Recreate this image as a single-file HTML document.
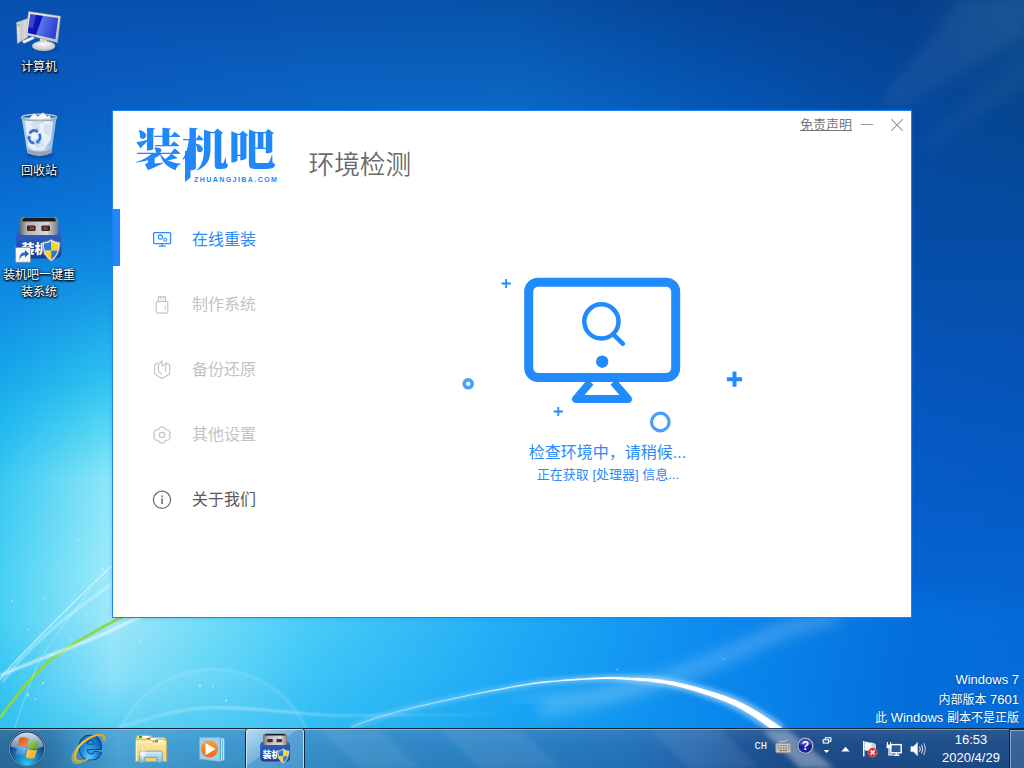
<!DOCTYPE html>
<html lang="zh-CN">
<head>
<meta charset="utf-8">
<title>装机吧一键重装系统</title>
<style>
*{box-sizing:border-box;margin:0;padding:0}
html,body{width:1024px;height:768px;overflow:hidden;background:#0a5ab8}
body{position:relative;font-family:"Liberation Sans","Noto Sans CJK SC",sans-serif;}
#desk{position:absolute;left:0;top:0;width:1024px;height:768px;overflow:hidden;
 background:
  radial-gradient(ellipse 1430px 1000px at 200px 690px, #58cef5 0%, #44c2f2 8%, #2ab0ee 22%, #1596e8 34%, #0f7cde 44%, #0868d0 57%, #0a5cb8 65%, #0850a8 72%, #05408e 88%, #053c88 100%);
}
#wallsvg{position:absolute;left:0;top:0}
.dicon{position:absolute;color:#fff;font-size:12px;line-height:17px;text-align:center;
 text-shadow:0 1px 2px #000,1px 1px 2px #000,0 0 3px rgba(0,0,0,.8);}
/* window */
#win{position:absolute;left:112px;top:110px;width:800px;height:508px;background:#fff;border:1px solid #1a82f5;box-shadow:0 0 4px rgba(20,120,240,.35)}
#win .abs{position:absolute}
.logo{position:absolute;left:23px;top:10px;width:160px;height:70px;color:#2288fa}
.logo .cn{position:absolute;left:-1px;top:2.4px;font-family:"Liberation Serif","Noto Serif CJK SC",serif;font-weight:900;font-size:46px;line-height:60px;letter-spacing:0;white-space:nowrap;transform:scale(1.018,.955);transform-origin:0 0}
.logo .en{position:absolute;left:58px;top:55px;font-size:7px;line-height:8px;letter-spacing:1.44px;white-space:nowrap;font-weight:700}
.logo .st{position:absolute;left:48.5px;top:30px;width:6px;height:31.5px;background:#2288fa;clip-path:polygon(0 0,100% 0,100% 84%,0 100%)}
.title{position:absolute;left:195.5px;top:36px;font-size:25.7px;line-height:36px;color:#6a6a6a;font-weight:350;white-space:nowrap}
.nav{position:absolute;left:0;width:260px;height:57px}
.nav .tx{position:absolute;left:79px;top:20px;font-size:16px;line-height:22px;white-space:nowrap}
.nav svg{position:absolute}
.nav.on{color:#2a8afb}
.nav.off{color:#c3c3c3}
.nav.nm{color:#595959}
.bar{position:absolute;left:0;top:98px;width:7px;height:57px;background:#2386fb}
.tr{position:absolute;font-size:13px;color:#777}
/* taskbar */
#tb{position:absolute;left:0;top:728px;width:1024px;height:40px;overflow:hidden;
 background:linear-gradient(to right,#2a6c9c 0%,#2e78aa 5%,#3a90c6 7.5%,#4ca4d8 11.5%,#48a2d6 14%,#3e9ad0 20%,#3892cc 30%,#3088c8 40%,#2a80c4 50%,#2475bc 61%,#2468b0 68%,#1e5698 73%,#1d4e8c 78%,#1e4e8a 100%);}
#tb .l1{position:absolute;left:0;top:0;width:100%;height:1px;background:#14283c}
#tb .l2{position:absolute;left:0;top:1px;width:100%;height:1px;background:linear-gradient(to right,#7fb4d6,#8cc4e4 20%,#7aa9d0 60%,#6f93bd 100%)}
#tb .sh{position:absolute;left:0;top:2px;width:100%;height:38px;background:linear-gradient(to bottom,rgba(255,255,255,.06) 0%,rgba(255,255,255,0) 40%,rgba(0,0,20,.06) 100%)}
#tbsvg{position:absolute;left:0;top:728px}
.wm .la{font-size:13px}
.wm{position:absolute;right:5px;color:#fff;font-size:12px;line-height:18px;white-space:nowrap;text-align:right;text-shadow:0 0 2px rgba(0,0,0,.35)}
.tray{position:absolute;color:#fff;white-space:nowrap}
</style>
</head>
<body>
<div id="desk">
<svg id="wallsvg" width="1024" height="768" viewBox="0 0 1024 768">
<defs>
<!--MESHDEFS--><linearGradient id="vg" x1="0" y1="0" x2="0" y2="1"><stop offset="0" stop-color="#000"/><stop offset="1" stop-color="#fff"/></linearGradient>
<mask id="vm" maskContentUnits="objectBoundingBox"><rect width="1" height="1" fill="url(#vg)"/></mask>
<linearGradient id="r0" x1="0" y1="0" x2="1024" y2="0" gradientUnits="userSpaceOnUse"><stop offset="0.0000" stop-color="#0850ae"/><stop offset="0.1094" stop-color="#0850b0"/><stop offset="0.2070" stop-color="#0950ae"/><stop offset="0.3047" stop-color="#0952ad"/><stop offset="0.5000" stop-color="#0852a8"/><stop offset="0.6953" stop-color="#054496"/><stop offset="0.8906" stop-color="#05408c"/><stop offset="1.0000" stop-color="#124e8e"/></linearGradient>
<linearGradient id="r1" x1="0" y1="0" x2="1024" y2="0" gradientUnits="userSpaceOnUse"><stop offset="0.0000" stop-color="#085ac0"/><stop offset="0.1094" stop-color="#0a60c4"/><stop offset="0.2070" stop-color="#0b63c5"/><stop offset="0.3047" stop-color="#0b66c6"/><stop offset="0.5000" stop-color="#0b69c6"/><stop offset="0.6953" stop-color="#0558b8"/><stop offset="0.8906" stop-color="#05489c"/><stop offset="1.0000" stop-color="#06468f"/></linearGradient>
<linearGradient id="r2" x1="0" y1="0" x2="1024" y2="0" gradientUnits="userSpaceOnUse"><stop offset="0.0000" stop-color="#0a74d6"/><stop offset="0.1094" stop-color="#0c7ada"/><stop offset="0.2070" stop-color="#0b74d3"/><stop offset="0.3047" stop-color="#0a6fcc"/><stop offset="0.5000" stop-color="#0863bf"/><stop offset="0.6953" stop-color="#0758b2"/><stop offset="0.8906" stop-color="#054ca4"/><stop offset="1.0000" stop-color="#054ca2"/></linearGradient>
<linearGradient id="r3" x1="0" y1="0" x2="1024" y2="0" gradientUnits="userSpaceOnUse"><stop offset="0.0000" stop-color="#0f86e0"/><stop offset="0.1094" stop-color="#1292e4"/><stop offset="0.2070" stop-color="#108add"/><stop offset="0.3047" stop-color="#0f82d6"/><stop offset="0.5000" stop-color="#0c71c8"/><stop offset="0.6953" stop-color="#0860ba"/><stop offset="0.8906" stop-color="#0550ac"/><stop offset="1.0000" stop-color="#0550aa"/></linearGradient>
<linearGradient id="r4" x1="0" y1="0" x2="1024" y2="0" gradientUnits="userSpaceOnUse"><stop offset="0.0000" stop-color="#16a8ea"/><stop offset="0.1094" stop-color="#30c4f0"/><stop offset="0.2070" stop-color="#2bb6ea"/><stop offset="0.3047" stop-color="#26a8e3"/><stop offset="0.5000" stop-color="#1b8dd6"/><stop offset="0.6953" stop-color="#1072c9"/><stop offset="0.8906" stop-color="#0656bc"/><stop offset="1.0000" stop-color="#0654b8"/></linearGradient>
<linearGradient id="r5" x1="0" y1="0" x2="1024" y2="0" gradientUnits="userSpaceOnUse"><stop offset="0.0000" stop-color="#22baee"/><stop offset="0.1094" stop-color="#5cdaf4"/><stop offset="0.2070" stop-color="#51caee"/><stop offset="0.3047" stop-color="#47bae8"/><stop offset="0.5000" stop-color="#319adb"/><stop offset="0.6953" stop-color="#1c79ce"/><stop offset="0.8906" stop-color="#0659c2"/><stop offset="1.0000" stop-color="#0558be"/></linearGradient>
<linearGradient id="r6" x1="0" y1="0" x2="1024" y2="0" gradientUnits="userSpaceOnUse"><stop offset="0.0000" stop-color="#38c8f2"/><stop offset="0.1094" stop-color="#90e8f8"/><stop offset="0.2070" stop-color="#7fd6f2"/><stop offset="0.3047" stop-color="#6ec5ec"/><stop offset="0.5000" stop-color="#4ba2df"/><stop offset="0.6953" stop-color="#297fd2"/><stop offset="0.8906" stop-color="#065cc6"/><stop offset="1.0000" stop-color="#055ac4"/></linearGradient>
<linearGradient id="r7" x1="0" y1="0" x2="1024" y2="0" gradientUnits="userSpaceOnUse"><stop offset="0.0000" stop-color="#48d0f4"/><stop offset="0.1094" stop-color="#a0ecf9"/><stop offset="0.2070" stop-color="#8ddbf4"/><stop offset="0.3047" stop-color="#79caef"/><stop offset="0.5000" stop-color="#53a8e6"/><stop offset="0.6953" stop-color="#2c86dc"/><stop offset="0.8906" stop-color="#0564d2"/><stop offset="1.0000" stop-color="#0563d0"/></linearGradient>
<linearGradient id="r8" x1="0" y1="0" x2="1024" y2="0" gradientUnits="userSpaceOnUse"><stop offset="0.0000" stop-color="#48d0f4"/><stop offset="0.1094" stop-color="#a0e8f8"/><stop offset="0.2070" stop-color="#70dcf8"/><stop offset="0.3047" stop-color="#48ccf8"/><stop offset="0.5000" stop-color="#22acf6"/><stop offset="0.6953" stop-color="#0c8cf0"/><stop offset="0.8906" stop-color="#0470dc"/><stop offset="1.0000" stop-color="#056ad6"/></linearGradient>
<linearGradient id="r9" x1="0" y1="0" x2="1024" y2="0" gradientUnits="userSpaceOnUse"><stop offset="0.0000" stop-color="#38c4f2"/><stop offset="0.1094" stop-color="#88e0f8"/><stop offset="0.2070" stop-color="#60d4f6"/><stop offset="0.3047" stop-color="#3cc4f6"/><stop offset="0.5000" stop-color="#1ca8f4"/><stop offset="0.6953" stop-color="#0b8aee"/><stop offset="0.8906" stop-color="#046eda"/><stop offset="1.0000" stop-color="#046cd8"/></linearGradient>
<linearGradient id="r10" x1="0" y1="0" x2="1024" y2="0" gradientUnits="userSpaceOnUse"><stop offset="0.0000" stop-color="#30c0f0"/><stop offset="0.1094" stop-color="#58d0f4"/><stop offset="0.2070" stop-color="#44c8f4"/><stop offset="0.3047" stop-color="#30bcf4"/><stop offset="0.5000" stop-color="#18a4f2"/><stop offset="0.6953" stop-color="#0a8aee"/><stop offset="0.8906" stop-color="#046eda"/><stop offset="1.0000" stop-color="#046cd8"/></linearGradient>
<linearGradient id="r11" x1="0" y1="0" x2="1024" y2="0" gradientUnits="userSpaceOnUse"><stop offset="0.0000" stop-color="#30c0f0"/><stop offset="0.1094" stop-color="#58d0f4"/><stop offset="0.2070" stop-color="#44c8f4"/><stop offset="0.3047" stop-color="#30bcf4"/><stop offset="0.5000" stop-color="#18a4f2"/><stop offset="0.6953" stop-color="#0a8aee"/><stop offset="0.8906" stop-color="#046eda"/><stop offset="1.0000" stop-color="#046cd8"/></linearGradient><!--/MESHDEFS-->
<filter id="b1" x="-20%" y="-20%" width="140%" height="140%"><feGaussianBlur stdDeviation="1"/></filter>
<filter id="b2" x="-20%" y="-20%" width="140%" height="140%"><feGaussianBlur stdDeviation="2.5"/></filter>
<filter id="b6" x="-20%" y="-20%" width="140%" height="140%"><feGaussianBlur stdDeviation="7"/></filter>
<radialGradient id="glow1" cx="0.5" cy="0.5" r="0.5"><stop offset="0" stop-color="#fff" stop-opacity=".30"/><stop offset="1" stop-color="#fff" stop-opacity="0"/></radialGradient>
<linearGradient id="sw" x1="351" y1="0" x2="780" y2="0" gradientUnits="userSpaceOnUse"><stop offset="0" stop-color="#fff" stop-opacity=".35"/><stop offset=".35" stop-color="#fff" stop-opacity=".75"/><stop offset=".6" stop-color="#fff" stop-opacity="1"/><stop offset="1" stop-color="#fff" stop-opacity="1"/></linearGradient>
<linearGradient id="le" x1="118" y1="0" x2="512" y2="0" gradientUnits="userSpaceOnUse"><stop offset="0" stop-color="#fff" stop-opacity=".2"/><stop offset=".3" stop-color="#fff" stop-opacity=".42"/><stop offset=".6" stop-color="#fff" stop-opacity=".25"/><stop offset="1" stop-color="#fff" stop-opacity="0"/></linearGradient>
</defs>
<!--MESH--><rect x="0" y="0" width="1024" height="110" fill="url(#r0)"/>
<rect x="0" y="0" width="1024" height="110" fill="url(#r1)" mask="url(#vm)"/>
<rect x="0" y="110" width="1024" height="110" fill="url(#r1)"/>
<rect x="0" y="110" width="1024" height="110" fill="url(#r2)" mask="url(#vm)"/>
<rect x="0" y="220" width="1024" height="60" fill="url(#r2)"/>
<rect x="0" y="220" width="1024" height="60" fill="url(#r3)" mask="url(#vm)"/>
<rect x="0" y="280" width="1024" height="100" fill="url(#r3)"/>
<rect x="0" y="280" width="1024" height="100" fill="url(#r4)" mask="url(#vm)"/>
<rect x="0" y="380" width="1024" height="50" fill="url(#r4)"/>
<rect x="0" y="380" width="1024" height="50" fill="url(#r5)" mask="url(#vm)"/>
<rect x="0" y="430" width="1024" height="50" fill="url(#r5)"/>
<rect x="0" y="430" width="1024" height="50" fill="url(#r6)" mask="url(#vm)"/>
<rect x="0" y="480" width="1024" height="100" fill="url(#r6)"/>
<rect x="0" y="480" width="1024" height="100" fill="url(#r7)" mask="url(#vm)"/>
<rect x="0" y="580" width="1024" height="40" fill="url(#r7)"/>
<rect x="0" y="580" width="1024" height="40" fill="url(#r8)" mask="url(#vm)"/>
<rect x="0" y="620" width="1024" height="60" fill="url(#r8)"/>
<rect x="0" y="620" width="1024" height="60" fill="url(#r9)" mask="url(#vm)"/>
<rect x="0" y="680" width="1024" height="48" fill="url(#r9)"/>
<rect x="0" y="680" width="1024" height="48" fill="url(#r10)" mask="url(#vm)"/>
<rect x="0" y="728" width="1024" height="40" fill="url(#r10)"/>
<rect x="0" y="728" width="1024" height="40" fill="url(#r11)" mask="url(#vm)"/><!--/MESH-->
<g fill="#fff" filter="url(#b6)"><polygon points="1024,0 1024,34 900,110 880,100 960,0" opacity=".05"/><polygon points="1024,60 1024,84 930,150 922,140" opacity=".04"/></g>
<circle cx="213.5" cy="771.6" r="103.6" fill="#fff" fill-opacity=".05"/>
<circle cx="213.5" cy="771.6" r="102.6" fill="none" stroke="#fff" stroke-opacity=".13" stroke-width="2.4" filter="url(#b1)"/>
<path d="M540,708 C620,700 700,668 770,636 C800,624 820,620 840,612" stroke="#fff" stroke-opacity=".2" stroke-width="16" fill="none" filter="url(#b6)"/>
<path d="M512,700 C560,699 620,690 660,680" stroke="#fff" stroke-opacity=".10" stroke-width="10" fill="none" filter="url(#b6)"/>
<path d="M118.0,727.5 L125.8,725.3 L133.2,723.1 L140.1,721.0 L146.8,719.1 L153.2,717.2 L159.4,715.5 L165.6,713.9 L171.9,712.4 L178.2,711.1 L184.7,710.0 L191.5,709.1 L198.7,708.4 L206.4,708.0 L214.6,707.7 L223.4,707.7 L232.9,707.9 L243.1,708.4 L253.6,709.1 L264.4,709.9 L275.0,710.8 L285.3,711.7 L295.0,712.6 L303.8,713.4 L311.5,714.1 L318.2,714.6 L324.3,715.0 L330.2,715.3 L336.1,715.5 L342.5,715.6 L349.7,715.6 L358.1,715.5 L368.1,715.4 L380.0,715.3 L394.2,715.2 L411.0,715.0 L430.8,714.9 L454.0,714.8 L481.0,714.7 L512.0,714.7" stroke="url(#le)" stroke-width="2.2" fill="none" filter="url(#b1)"/>
<path d="M351.4,728.5 L358.1,725.5 L366.0,722.5 L375.0,719.5 L385.0,716.5 L395.6,713.5 L406.9,710.6 L418.6,707.7 L430.5,704.9 L442.4,702.3 L454.3,699.7 L465.9,697.3 L477.0,695.1 L487.5,693.1 L497.3,691.2 L506.1,689.6 L513.7,688.2 L520.2,687.1 L525.7,686.2 L530.5,685.4 L534.8,684.8 L538.9,684.3 L543.1,683.9 L547.7,683.5 L552.8,683.1 L558.5,682.7 L564.8,682.3 L571.4,681.8 L578.1,681.4 L584.7,681.1 L591.0,680.8 L596.9,680.5 L602.1,680.4 L606.6,680.4 L610.5,680.5 L614.0,680.6 L617.3,680.8 L620.4,681.0 L623.6,681.3 L627.0,681.6 L630.8,682.0 L634.8,682.3 L639.3,682.7 L644.0,683.1 L649.0,683.6 L654.2,684.3 L659.5,685.0 L665.1,686.0 L670.7,687.2 L676.4,688.5 L682.2,690.0 L687.9,691.6 L693.5,693.3 L699.0,695.0 L704.2,696.7 L709.0,698.5 L713.6,700.1 L717.7,701.7 L721.5,703.2 L725.1,704.7 L728.4,706.2 L731.6,707.7 L734.8,709.3 L737.9,711.0 L741.1,712.8 L744.3,714.7 L747.5,716.6 L750.8,718.7 L753.9,720.7 L757.0,722.7 L760.0,724.7 L762.8,726.7 L765.4,728.5 L767.8,730.3 L770.0,731.9 L771.8,733.3 L773.4,734.5 L774.5,735.4 L775.3,736.1 L775.6,736.4 L784.4,725.6 L783.7,725.1 L782.7,724.5 L781.4,723.6 L779.7,722.4 L777.7,721.0 L775.4,719.5 L772.8,717.8 L770.1,715.9 L767.1,714.0 L764.0,712.0 L760.7,710.0 L757.3,707.9 L753.9,705.9 L750.4,704.0 L746.9,702.1 L743.4,700.3 L739.9,698.7 L736.4,697.2 L732.8,695.8 L729.1,694.4 L725.2,693.1 L721.2,691.8 L716.8,690.4 L712.1,689.0 L707.1,687.5 L701.7,686.0 L696.0,684.5 L690.2,683.0 L684.3,681.6 L678.3,680.3 L672.3,679.2 L666.3,678.2 L660.6,677.5 L655.0,676.9 L649.6,676.5 L644.5,676.2 L639.7,676.1 L635.2,675.9 L631.1,675.8 L627.4,675.8 L624.0,675.7 L620.7,675.6 L617.5,675.5 L614.1,675.5 L610.5,675.6 L606.5,675.7 L601.9,675.9 L596.7,676.1 L590.8,676.5 L584.4,676.9 L577.8,677.4 L571.1,678.0 L564.5,678.5 L558.2,679.1 L552.5,679.6 L547.3,680.1 L542.8,680.6 L538.5,681.1 L534.4,681.6 L530.0,682.3 L525.2,683.1 L519.6,684.1 L513.2,685.3 L505.5,686.7 L496.7,688.4 L487.0,690.3 L476.5,692.4 L465.3,694.7 L453.8,697.2 L441.9,699.8 L429.9,702.5 L418.0,705.3 L406.3,708.3 L395.0,711.3 L384.3,714.3 L374.4,717.4 L365.3,720.5 L357.3,723.6 L350.6,726.7Z" fill="#fff" fill-opacity=".5" filter="url(#b2)"/>
<path d="M351.2,728.0 L357.9,725.0 L365.8,721.9 L374.8,718.9 L384.8,715.9 L395.5,712.8 L406.7,709.9 L418.4,707.0 L430.3,704.2 L442.3,701.5 L454.1,699.0 L465.7,696.5 L476.9,694.3 L487.4,692.2 L497.1,690.4 L505.9,688.7 L513.5,687.3 L520.0,686.2 L525.5,685.3 L530.3,684.5 L534.7,683.9 L538.8,683.4 L543.0,682.9 L547.6,682.5 L552.7,682.1 L558.4,681.6 L564.7,681.1 L571.3,680.7 L578.0,680.2 L584.6,679.8 L590.9,679.5 L596.8,679.2 L602.0,679.0 L606.6,679.0 L610.5,679.0 L614.1,679.1 L617.3,679.2 L620.5,679.4 L623.7,679.6 L627.1,679.9 L630.8,680.1 L634.9,680.4 L639.4,680.7 L644.1,681.1 L649.1,681.6 L654.4,682.2 L659.8,682.9 L665.4,683.8 L671.1,685.0 L676.9,686.3 L682.7,687.8 L688.5,689.4 L694.2,691.0 L699.6,692.7 L704.9,694.4 L709.8,696.1 L714.4,697.7 L718.6,699.2 L722.5,700.7 L726.1,702.1 L729.5,703.6 L732.8,705.1 L736.1,706.6 L739.3,708.3 L742.5,710.1 L745.8,712.0 L749.1,714.0 L752.3,716.1 L755.5,718.1 L758.7,720.2 L761.6,722.2 L764.5,724.2 L767.1,726.1 L769.5,727.8 L771.7,729.4 L773.6,730.8 L775.2,732.0 L776.4,732.9 L777.3,733.6 L777.7,733.9 L782.3,728.1 L781.8,727.7 L780.8,727.0 L779.5,726.0 L777.9,724.9 L775.9,723.5 L773.7,721.9 L771.1,720.2 L768.4,718.4 L765.4,716.5 L762.3,714.5 L759.1,712.5 L755.8,710.5 L752.3,708.5 L748.9,706.6 L745.4,704.8 L742.0,703.0 L738.6,701.4 L735.2,699.8 L731.7,698.4 L728.1,697.0 L724.3,695.6 L720.3,694.2 L716.0,692.8 L711.3,691.4 L706.3,689.9 L701.0,688.3 L695.4,686.7 L689.6,685.2 L683.7,683.8 L677.8,682.5 L671.8,681.3 L666.0,680.4 L660.3,679.6 L654.7,679.0 L649.4,678.6 L644.3,678.2 L639.5,678.0 L635.1,677.8 L631.0,677.7 L627.3,677.5 L623.9,677.4 L620.6,677.2 L617.4,677.1 L614.1,677.1 L610.5,677.0 L606.5,677.1 L602.0,677.2 L596.7,677.5 L590.8,677.8 L584.5,678.2 L577.9,678.6 L571.2,679.1 L564.6,679.6 L558.3,680.2 L552.5,680.7 L547.4,681.1 L542.9,681.6 L538.7,682.1 L534.5,682.6 L530.1,683.2 L525.3,684.0 L519.8,685.0 L513.3,686.1 L505.7,687.6 L496.9,689.2 L487.2,691.1 L476.6,693.2 L465.5,695.5 L453.9,697.9 L442.1,700.5 L430.1,703.2 L418.2,706.1 L406.5,709.0 L395.2,712.0 L384.5,715.0 L374.6,718.1 L365.5,721.1 L357.5,724.2 L350.8,727.2Z" fill="url(#sw)"/>
<path d="M0.0,718.0 L2.4,714.6 L4.9,711.2 L7.4,707.9 L9.9,704.5 L12.5,701.1 L15.1,697.8 L17.7,694.5 L20.4,691.2 L23.1,687.9 L25.9,684.7 L28.7,681.5 L31.6,678.3 L34.5,675.3 L37.5,672.2 L40.5,669.2 L43.6,666.3 L46.7,663.5 L49.9,660.7 L53.2,658.0 L56.5,655.4 L59.9,652.9 L63.3,650.4 L66.8,648.1 L70.4,645.8 L74.0,643.6 L77.6,641.5 L81.3,639.4 L85.0,637.3 L88.6,635.1 L92.3,633.0 L95.9,630.9 L99.6,628.8 L103.3,626.7 L107.0,624.7 L110.7,622.7 L114.5,620.8 L118.3,618.9 L122.1,617.2 L126.0,615.5" stroke="#8cd840" stroke-width="2.7" fill="none"/>
<path d="M0.0,675.5 L6.1,673.0 L11.9,670.6 L17.6,668.2 L23.2,666.0 L28.5,663.9 L33.7,661.8 L38.7,659.8 L43.5,657.9 L48.2,656.1 L52.7,654.4 L57.0,652.7 L61.2,651.1 L65.2,649.5 L69.1,648.1 L72.8,646.6 L76.3,645.2 L79.7,643.9 L82.9,642.6 L86.0,641.4 L88.9,640.2 L91.7,639.0 L94.4,637.9 L97.0,636.8 L99.5,635.7 L101.9,634.6 L104.3,633.6 L106.7,632.5 L109.0,631.4 L111.4,630.3 L113.8,629.2 L116.3,628.0 L118.8,626.8 L121.4,625.6 L124.1,624.3 L127.0,623.0 L130.0,621.6 L133.1,620.1 L136.5,618.6 L140.0,617.0" stroke="#fff" stroke-opacity=".8" stroke-width="2.2" fill="none" filter="url(#b1)"/>
<path d="M0.0,680.0 L0.3,679.1 L1.1,677.8 L2.4,676.0 L4.2,673.8 L6.4,671.2 L9.0,668.2 L12.0,664.9 L15.4,661.4 L19.0,657.5 L22.9,653.4 L27.1,649.1 L31.5,644.6 L36.0,640.0 L40.7,635.3 L45.5,630.4 L50.4,625.5 L55.4,620.6 L60.3,615.7 L65.3,610.8 L70.2,606.0 L75.0,601.2 L79.8,596.6 L84.4,592.2 L88.8,587.9 L93.0,583.8 L97.0,580.0 L100.7,576.4 L104.1,573.2 L107.2,570.3 L110.0,567.7 L112.3,565.6 L114.2,563.8 L115.7,562.5 L116.6,561.7 L117.1,561.4 L117.0,561.7 L116.3,562.5 L115.0,563.9 L113.0,566.0" stroke="#fff" stroke-opacity=".55" stroke-width="1.3" fill="none"/>
<path d="M2.6,682.0 L5.2,678.4 L7.8,675.0 L10.5,671.5 L13.3,668.1 L16.1,664.8 L18.9,661.5 L21.8,658.3 L24.8,655.1 L27.8,652.0 L30.8,648.9 L33.8,645.9 L36.9,642.9 L40.0,640.0 L43.1,637.1 L46.2,634.3 L49.3,631.6 L52.5,628.9 L55.6,626.2 L58.7,623.7 L61.8,621.1 L64.9,618.6 L68.0,616.2 L71.0,613.8 L74.1,611.5 L77.0,609.2 L80.0,607.0 L82.9,604.8 L85.8,602.7 L88.6,600.7 L91.3,598.7 L94.0,596.7 L96.7,594.8 L99.3,593.0 L101.7,591.2 L104.2,589.4 L106.5,587.7 L108.8,586.1 L110.9,584.5 L113.0,583.0" stroke="#fff" stroke-opacity=".6" stroke-width="1.6" fill="none" filter="url(#b1)"/>
<path d="M14.8,728.0 L16.9,721.6 L18.9,715.7 L20.8,710.1 L22.6,704.9 L24.2,700.0 L25.8,695.5 L27.3,691.2 L28.7,687.3 L30.0,683.6 L31.3,680.1 L32.6,676.9 L33.8,673.9 L35.0,671.0 L36.2,668.3 L37.4,665.7 L38.5,663.2 L39.7,660.9 L41.0,658.6 L42.2,656.3 L43.6,654.1 L44.9,651.8 L46.4,649.6 L47.9,647.3 L49.5,645.0 L51.2,642.5 L53.0,640.0 L54.9,637.3 L57.0,634.5 L59.2,631.6 L61.5,628.4 L64.0,625.1 L66.7,621.5 L69.6,617.6 L72.6,613.5 L75.8,609.1 L79.3,604.3 L83.0,599.2 L86.9,593.8 L91.0,588.0" stroke="#fff" stroke-opacity=".3" stroke-width="1" fill="none"/>
<g fill="#fff" fill-opacity=".42"><circle cx="12" cy="601" r="1"/><circle cx="28" cy="629.5" r="1"/><circle cx="44" cy="598" r=".9"/><circle cx="51" cy="626.5" r=".8"/><circle cx="70" cy="638" r=".9"/><circle cx="86" cy="614.5" r=".9"/><circle cx="52" cy="655" r="1.2"/><circle cx="28" cy="695" r="1.6"/><circle cx="35" cy="699" r="1"/><circle cx="43" cy="683" r="1.2"/><circle cx="140" cy="640.5" r="1"/><circle cx="200" cy="686" r="1.4"/><circle cx="213" cy="686.5" r="1"/><circle cx="226" cy="700.5" r="1.2"/><circle cx="56" cy="562" r=".8"/><circle cx="78" cy="540" r=".9"/><circle cx="103" cy="569" r="1.1"/><circle cx="617" cy="669.5" r=".9"/><circle cx="724" cy="659" r=".8"/></g>
</svg>
</div>

<!-- desktop icons -->
<svg id="dsvg" width="90" height="300" viewBox="0 0 90 300" style="position:absolute;left:0;top:0">
<defs>
<linearGradient id="scr" x1="0" y1="0" x2="1" y2=".3"><stop offset="0" stop-color="#1a2ad0"/><stop offset=".45" stop-color="#0a10b4"/><stop offset=".5" stop-color="#5a74e6"/><stop offset="1" stop-color="#2a44d6"/></linearGradient>
<linearGradient id="frm" x1="0" y1="0" x2="1" y2="1"><stop offset="0" stop-color="#f4f3ee"/><stop offset="1" stop-color="#c2c1b8"/></linearGradient>
<linearGradient id="twr" x1="0" y1="0" x2="1" y2="0"><stop offset="0" stop-color="#f0f0ee"/><stop offset=".4" stop-color="#c9c9c6"/><stop offset="1" stop-color="#e4e4e2"/></linearGradient>
<radialGradient id="bas" cx=".5" cy=".3" r=".7"><stop offset="0" stop-color="#fdfdfd"/><stop offset="1" stop-color="#b9bcc0"/></radialGradient>
<linearGradient id="bin" x1="0" y1="0" x2="1" y2="0"><stop offset="0" stop-color="#b9d4ee" stop-opacity=".85"/><stop offset=".5" stop-color="#e9f2fb" stop-opacity=".92"/><stop offset="1" stop-color="#9fc2e6" stop-opacity=".8"/></linearGradient>
<linearGradient id="met2" x1="0" y1="0" x2="1" y2="0"><stop offset="0" stop-color="#6a6a6a"/><stop offset=".18" stop-color="#b4b4b4"/><stop offset=".7" stop-color="#dadada"/><stop offset="1" stop-color="#777"/></linearGradient>
<linearGradient id="ubl2" x1="0" y1="0" x2="0" y2="1"><stop offset="0" stop-color="#3366c8"/><stop offset="1" stop-color="#1b3c92"/></linearGradient>
<clipPath id="shc2"><path d="M0,-11 C3,-8.8 6,-8 8.8,-8 C8.8,0 6.6,6.6 0,11 C-6.6,6.6 -8.8,0 -8.8,-8 C-6,-8 -3,-8.8 0,-11 Z"/></clipPath>
</defs>
<!-- computer -->
<g>
<ellipse cx="45" cy="47.5" rx="13" ry="4.5" fill="#04255a" opacity=".35" filter="url(#b1)"/>
<polygon points="16.6,22.6 27.6,18.6 27.8,37 17.4,43.6" fill="url(#twr)" stroke="#a9a9a6" stroke-width=".5"/>
<rect x="17.5" y="23.6" width="1.8" height="2.6" fill="#3be03a" transform="skewY(-18) translate(0,6)"/>
<polygon points="22,41 32.5,36.6 34.6,38.4 24,43.4" fill="#f4f4f2" stroke="#b4b4b2" stroke-width=".4"/>
<path d="M40,38 L47,39.6 L47.6,44 L39.6,43 Z" fill="#d4d5d6"/>
<ellipse cx="43.6" cy="46" rx="11.6" ry="4.9" fill="url(#bas)" stroke="#aab0b6" stroke-width=".4"/>
<polygon points="28.6,11.6 60.6,16.2 57.4,42.4 25.8,34.8" fill="url(#frm)" stroke="#a8a8a0" stroke-width=".5"/>
<polygon points="30.2,14 58.2,18 55.4,39.2 27.6,33" fill="url(#scr)"/>
<polygon points="30.2,14 36,14.8 33,28 28.4,27" fill="#fff" opacity=".18"/>
</g>
<!-- recycle bin -->
<g>
<ellipse cx="40" cy="155" rx="14" ry="3.6" fill="#04255a" opacity=".3" filter="url(#b1)"/>
<path d="M21.6,117.6 L56.6,117.6 L51.4,153 Q39.5,158.6 27.4,153 Z" fill="url(#bin)"/>
<path d="M25,121 L33,119.6 L38,126 L46,120 L53,122 L50.6,140 L44,149 L34,150 L28,146 Z" fill="#f3f7fc" opacity=".8"/>
<path d="M30,124 L36,121 L41,128 L37,134 Z M43,124 L51,125 L50,136 L44,133Z M33,140 L41,137 L45,146 L36,149Z" fill="#cfdcec" opacity=".8"/>
<g opacity=".92"><path d="M29.6,133.6 A5.6,6.4 0 0 1 36.1,130.7" fill="none" stroke="#2f62cf" stroke-width="2.6"/><polygon points="36.9,128.2 35.3,133.1 38.5,131.9" fill="#2f62cf"/><path d="M39.2,133.6 A5.6,6.4 0 0 1 38.1,141.6" fill="none" stroke="#2f62cf" stroke-width="2.6"/><polygon points="39.9,143.5 36.4,139.7 36.1,143.3" fill="#2f62cf"/><path d="M34.4,143.2 A5.6,6.4 0 0 1 28.9,138.1" fill="none" stroke="#2f62cf" stroke-width="2.6"/><polygon points="26.4,138.7 31.5,137.6 28.7,135.2" fill="#2f62cf"/></g>
<path d="M27,149 Q39.5,154 51.8,149 L51.4,153 Q39.5,158.6 27.4,153Z" fill="#9a9da2" opacity=".9"/>
<ellipse cx="39.1" cy="117.4" rx="17.6" ry="3" fill="none" stroke="#9da1a6" stroke-width="1.5"/>
<ellipse cx="39.1" cy="117" rx="17.6" ry="3" fill="none" stroke="#e2e6ea" stroke-width=".6"/>
<path d="M30,117.6 L34,113.6 L38,116.6 L43,112.6 L47,116.4 L50,115.6 L50.6,118.6 L30,119Z" fill="#f6f9fd"/>
</g>
<!-- usb app -->
<g>
<rect x="16.2" y="229.6" width="45" height="29" rx="5.5" fill="url(#ubl2)"/>
<rect x="20" y="217" width="38.2" height="18" rx="4" fill="url(#met2)"/>
<path d="M22.4,220.6 Q22.4,217.6 26,217.6 L52.2,217.6 Q55.8,217.6 55.8,220.6 L55.4,221.6 L22.8,221.6 Z" fill="#1c1c1c"/>
<rect x="27" y="225.6" width="8.6" height="5.4" rx="1.2" fill="#3a2420"/><rect x="29.4" y="226.6" width="4.8" height="3.4" fill="#8a3e2c"/>
<rect x="41.4" y="225.6" width="8.6" height="5.4" rx="1.2" fill="#3a2420"/><rect x="43" y="226.6" width="4.8" height="3.4" fill="#8a3e2c"/>
<text x="21.6" y="252.6" font-family="Liberation Sans, Noto Sans CJK SC, sans-serif" font-weight="900" font-size="13" fill="#fff">装机</text>
<g transform="translate(51.2,250.2)">
<path d="M0,-11 C3,-8.8 6,-8 8.8,-8 C8.8,0 6.6,6.6 0,11 C-6.6,6.6 -8.8,0 -8.8,-8 C-6,-8 -3,-8.8 0,-11 Z" fill="#ececec" stroke="#8c8c8c" stroke-width=".7"/>
<g clip-path="url(#shc2)" transform="scale(.84)"><rect x="-10" y="-12" width="10" height="12.4" fill="#2b7ad8"/><rect x="0" y="-12" width="10" height="12.4" fill="#ffd21f"/><rect x="-10" y=".4" width="10" height="12" fill="#ffd21f"/><rect x="0" y=".4" width="10" height="12" fill="#2b7ad8"/></g>
</g>
<rect x="15.4" y="247.6" width="15" height="14.6" fill="#f4f6f8" stroke="#8d9298" stroke-width=".8"/>
<path d="M19.6,259.8 C19,255 21.4,252.4 25,252.2 L25,250 L29,253.8 L25,257.4 L25,255.2 C22.6,255.2 20.6,256.6 19.6,259.8Z" fill="#2d62c4"/>
</g>
</svg>

<div class="dicon" style="left:0;top:59px;width:78px">计算机</div>
<div class="dicon" style="left:0;top:163px;width:78px">回收站</div>
<div class="dicon" style="left:0;top:267px;width:78px">装机吧一键重<br>装系统</div>

<!-- app window -->
<div id="win">
  <div class="logo"><span class="cn">装机吧</span><span class="st"></span><span class="en">ZHUANGJIBA.COM</span></div>
  <div class="title">环境检测</div>
<svg class="abs" style="left:0;top:0" width="798" height="506" viewBox="113 111 798 506">
<g fill="none" stroke="#218afc">
<rect x="528.7" y="282.25" width="147" height="95.25" rx="9.5" stroke-width="9"/>
<path d="M590.5,382 L576,399 L628,399 L613.5,382" stroke-width="8" stroke-linejoin="round"/>
<circle cx="601.4" cy="321.4" r="17.1" stroke-width="4.5"/>
<path d="M614.3,335.4 L623,343.8" stroke-width="4.5" stroke-linecap="round"/>
<path d="M501.6,283.5 H510.8 M506.2,278.9 V288.1" stroke-width="1.8"/>
<path d="M553.7,411.5 H562.9 M558.3,406.9 V416.1" stroke-width="1.8"/>
<path d="M726.9,379.2 H742.1 M734.5,371.6 V386.8" stroke-width="4"/>
<circle cx="468.2" cy="383.8" r="4" stroke="#4a9efc" stroke-width="3.6"/>
<circle cx="660.3" cy="422" r="8.8" stroke="#4a9efc" stroke-width="3.2"/>
</g>
<circle cx="602.2" cy="361.7" r="6.2" fill="#218afc"/>
<!-- window controls -->
<path d="M861,124.5 H873" stroke="#999" stroke-width="1"/>
<path d="M891.2,119.2 L902.8,130.8 M902.8,119.2 L891.2,130.8" stroke="#999" stroke-width="1.1"/>
<!-- nav icons -->
<g fill="none" stroke="#2a8afb" stroke-width="1.3">
<rect x="153.6" y="232.6" width="17" height="11" rx="1"/>
<path d="M162.1,243.6 V246 M158.6,246.2 H165.6"/>
<circle cx="160.4" cy="237" r="2.1" stroke-width="1.1"/><circle cx="165.2" cy="239.8" r="1.5" stroke-width="1.1"/>
</g>
<g fill="none" stroke="#c6c6c6" stroke-width="1.2">
<path d="M158.4,301.4 V296.8 H165.6 V301.4"/><rect x="156.2" y="301.4" width="11.6" height="11.8" rx="1.4"/>
<path d="M160.6,296.8 V299.4 M163.4,296.8 V299.4 M165.2,305 V310" stroke-width="1"/>
</g>
<g fill="none" stroke="#c6c6c6" stroke-width="1.2" stroke-linejoin="round">
<path d="M162,378.4 L154.6,374 V364.8 L158.4,362.6 M165.6,362.6 L169.6,364.8 V374 L162,378.4"/>
<path d="M158.4,372 V364.8 L162,361 V366 L165.6,364 V372" />
<path d="M158.4,372 L162,374"/>
</g>
<g fill="none" stroke="#c6c6c6" stroke-width="1.2">
<circle cx="162" cy="435" r="2.7"/>
<path d="M160.2,427.2 H163.8 L165.6,429.6 L168.6,430 L170.4,433.2 L169.2,435 L170.4,436.8 L168.6,440 L165.6,440.4 L163.8,442.8 H160.2 L158.4,440.4 L155.4,440 L153.6,436.8 L154.8,435 L153.6,433.2 L155.4,430 L158.4,429.6 Z" stroke-linejoin="round"/>
</g>
<g>
<circle cx="162" cy="499.8" r="8.6" fill="none" stroke="#666" stroke-width="1.2"/>
<rect x="161.3" y="498.4" width="1.5" height="5.6" fill="#666"/><rect x="161.3" y="495.4" width="1.5" height="1.7" fill="#666"/>
</g>
</svg>
  <div class="bar"></div>
  <div class="nav on" style="top:98px"><span class="tx">在线重装</span></div>
  <div class="nav off" style="top:163px"><span class="tx">制作系统</span></div>
  <div class="nav off" style="top:228px"><span class="tx">备份还原</span></div>
  <div class="nav off" style="top:293px"><span class="tx">其他设置</span></div>
  <div class="nav nm" style="top:358px"><span class="tx">关于我们</span></div>
  <div class="tr" style="left:687px;top:5px;line-height:18px;text-decoration:underline">免责声明</div>
  <div class="abs" style="left:414.5px;top:331px;width:160px;text-align:center;font-size:16px;line-height:22px;color:#2a8afb;white-space:nowrap">检查环境中，请稍候...</div>
  <div class="abs" style="left:415px;top:355px;width:160px;text-align:center;font-size:13px;line-height:18px;color:#2a8afb;white-space:nowrap">正在获取 [处理器] 信息...</div>
</div>

<!-- watermark -->
<div class="wm" style="top:671px"><span class="la">Windows 7</span></div>
<div class="wm" style="top:691px">内部版本<span class="la"> 7601</span></div>
<div class="wm" style="top:709px">此<span class="la"> Windows </span>副本不是正版</div>

<!-- taskbar -->
<div id="tb"><div class="l1"></div><div class="l2"></div><div class="sh"></div></div>
<svg id="tbsvg" width="1024" height="40" viewBox="0 728 1024 40">
<defs>
<radialGradient id="orbbg" cx=".5" cy=".55" r=".55"><stop offset="0" stop-color="#2a86c6"/><stop offset=".7" stop-color="#11508f"/><stop offset="1" stop-color="#0a2f5e"/></radialGradient>
<linearGradient id="orbgl" x1="0" y1="0" x2="0" y2="1"><stop offset="0" stop-color="#dfe8f1" stop-opacity=".95"/><stop offset="1" stop-color="#7e9fc0" stop-opacity=".75"/></linearGradient>
<radialGradient id="orbcy" cx=".5" cy="1" r=".7"><stop offset="0" stop-color="#2fe0ff" stop-opacity=".95"/><stop offset=".55" stop-color="#1aa6e0" stop-opacity=".5"/><stop offset="1" stop-color="#1aa6e0" stop-opacity="0"/></radialGradient>
<linearGradient id="fr" x1="0" y1="0" x2="1" y2="1"><stop offset="0" stop-color="#e8431a"/><stop offset="1" stop-color="#f79a2a"/></linearGradient>
<linearGradient id="fg" x1="0" y1="0" x2="1" y2="1"><stop offset="0" stop-color="#b5d56a"/><stop offset="1" stop-color="#4f9e2c"/></linearGradient>
<linearGradient id="fb" x1="1" y1="0" x2="0" y2="1"><stop offset="0" stop-color="#8fc3ec"/><stop offset="1" stop-color="#1d78c8"/></linearGradient>
<linearGradient id="fy" x1="0" y1="0" x2="1" y2="1"><stop offset="0" stop-color="#ffd84a"/><stop offset="1" stop-color="#f7a11c"/></linearGradient>
<radialGradient id="ieb" cx=".45" cy=".8" r=".8"><stop offset="0" stop-color="#56d0fa"/><stop offset=".45" stop-color="#1a86d8"/><stop offset="1" stop-color="#0a2f7a"/></radialGradient>
<linearGradient id="ieg" x1="0" y1="1" x2="1" y2="0"><stop offset="0" stop-color="#f2b01a"/><stop offset=".5" stop-color="#ffc52e"/><stop offset="1" stop-color="#e9a514"/></linearGradient>
<linearGradient id="fold" x1="0" y1="0" x2="0" y2="1"><stop offset="0" stop-color="#fbeaa4"/><stop offset="1" stop-color="#efcd6c"/></linearGradient>
<linearGradient id="gls" x1="0" y1="0" x2="0" y2="1"><stop offset="0" stop-color="#d9f1fb" stop-opacity=".95"/><stop offset="1" stop-color="#6fb7e2" stop-opacity=".9"/></linearGradient>
<linearGradient id="wmo" x1="0" y1="0" x2="0" y2="1"><stop offset="0" stop-color="#ff9c2e"/><stop offset="1" stop-color="#ee6a12"/></linearGradient>
<linearGradient id="btn" x1="0" y1="0" x2="1" y2="1"><stop offset="0" stop-color="#d6ebf7" stop-opacity=".85"/><stop offset=".45" stop-color="#8fc3e4" stop-opacity=".7"/><stop offset=".46" stop-color="#62a7d6" stop-opacity=".7"/><stop offset="1" stop-color="#4b98cf" stop-opacity=".75"/></linearGradient>
<linearGradient id="met" x1="0" y1="0" x2="1" y2="0"><stop offset="0" stop-color="#6e6e6e"/><stop offset=".2" stop-color="#b9b9b9"/><stop offset=".75" stop-color="#d8d8d8"/><stop offset="1" stop-color="#7a7a7a"/></linearGradient>
<linearGradient id="ubl" x1="0" y1="0" x2="0" y2="1"><stop offset="0" stop-color="#3264c4"/><stop offset="1" stop-color="#1b3d94"/></linearGradient>
<clipPath id="shc"><path id="shp" d="M0,-7.6 C2,-6 4,-5.4 6,-5.4 C6,0 4.5,4.6 0,7.6 C-4.5,4.6 -6,0 -6,-5.4 C-4,-5.4 -2,-6 0,-7.6 Z"/></clipPath>

</defs>
<!-- diagonal glass streaks -->
<g opacity=".07" fill="#fff" filter="url(#b2)"><polygon points="320,730 380,730 420,768 360,768"/><polygon points="440,730 520,730 562,768 480,768"/><polygon points="650,730 720,730 760,768 690,768"/></g>
<polygon points="762,730 788,730 834,768 800,768" fill="#fff" opacity=".34" filter="url(#b2)"/>
<!-- start orb -->
<g>
<circle cx="27" cy="748.5" r="18.6" fill="#0b2e57" opacity=".55"/>
<circle cx="27" cy="748.5" r="17.6" fill="url(#orbbg)" stroke="#a9c9e6" stroke-opacity=".75" stroke-width=".9"/>
<circle cx="27" cy="748.5" r="16.8" fill="url(#orbcy)"/>
<path d="M10.6,746.5 A16.6,16.6 0 0 1 43.4,746.5 C33,750.5 21,750.5 10.6,746.5 Z" fill="url(#orbgl)"/>

<path d="M19.6,737.9 C22.6,736.8 25.8,737.2 28.8,738.9 L27,746.6 C24,745.2 20.8,745 17.7,746 Z" fill="url(#fr)"/>
<path d="M29.9,739.6 C33,741.2 36.2,741.4 39.3,740.3 L37.3,748.4 C34.2,749.4 31.1,749.2 28.1,747.5 Z" fill="url(#fg)"/>
<path d="M17.4,747.3 C20.4,746.2 23.5,746.5 26.6,748 L24.5,756.2 C21.5,754.6 18.3,754.4 15.2,755.4 Z" fill="url(#fb)"/>
<path d="M27.7,748.8 C30.8,750.5 33.9,750.8 37,749.7 L34.8,757.9 C31.7,759 28.6,758.7 25.6,757 Z" fill="url(#fy)"/>
</g>
<!-- IE -->
<g>
<ellipse cx="89" cy="748" rx="20" ry="8" transform="rotate(-41 89 748)" fill="none" stroke="#d8c24a" stroke-opacity=".55" stroke-width="3.2" stroke-dasharray="30 200" stroke-dashoffset="-38"/>
<text x="90.2" y="759.3" text-anchor="middle" font-family="Liberation Sans, sans-serif" font-weight="700" font-size="42.5" fill="#0a2a66" stroke="#0a2a66" stroke-width="2.6" stroke-linejoin="round">e</text>
<text x="90.2" y="759.3" text-anchor="middle" font-family="Liberation Sans, sans-serif" font-weight="700" font-size="42.5" fill="url(#ieb)" stroke="url(#ieb)" stroke-width="1.2" stroke-linejoin="round">e</text>
<path d="M75.5,759.5 C73,752 82,739 96,735.2 C101.5,733.8 105,735.5 104.3,739.6" fill="none" stroke="url(#ieg)" stroke-width="2.1" stroke-linecap="round"/>
<path d="M75.5,759.5 C79,762 84,761.5 87.5,759.2" fill="none" stroke="#f0ac1a" stroke-width="1.6" stroke-linecap="round"/>
</g>
<!-- explorer -->
<g>
<path d="M136.3,740 L136.3,737 Q136.3,735.4 138,735.4 L150.2,735.4 Q151.6,735.4 151.6,737 L151.6,740 Z" fill="#f3d98a" stroke="#d2aa52" stroke-width=".6"/>
<path d="M146.2,741 L146.2,738.8 Q146.2,737.5 147.6,737.5 L164,737.5 Q165.4,737.5 165.4,738.8 L165.4,741 Z" fill="#f3d98a" stroke="#d2aa52" stroke-width=".6"/>
<rect x="139" y="736" width="3.2" height="2.1" fill="#13b526"/><rect x="142.2" y="736" width="6.6" height="2.1" fill="#fff"/>
<rect x="147.2" y="738" width="2.9" height="2" fill="#d93223"/><rect x="150.1" y="738" width="6.3" height="2" fill="#fff"/>
<path d="M135.5,761.6 L135.5,740.6 Q135.5,739.6 136.6,739.6 L151.6,739.6 L153.6,743.4 L153.6,741 Q153.6,739.7 155,739.7 L165.4,739.7 Q166.6,739.7 166.6,741 L166.6,761.6 Z" fill="url(#fold)" stroke="#d2aa52" stroke-width=".7"/>
<path d="M136.6,760.8 L136.6,742.6 L152,742.6 L153.8,744 L165.8,744" fill="none" stroke="#fff6cf" stroke-width=".9"/>
<rect x="155" y="740.3" width="3.1" height="1.9" fill="#1e8de8"/><rect x="158.1" y="740.3" width="5" height="1.9" fill="#fff"/>
<path d="M139.3,763 L139.3,753.2 Q139.3,751.2 141.4,751.2 L160.2,751.2 Q162.3,751.2 162.3,753.2 L162.3,763 L156.8,763 L156.8,757.4 L144.9,757.4 L144.9,763 Z" fill="url(#gls)" stroke="#3f95cf" stroke-width=".7"/>
<circle cx="142.6" cy="753.8" r="2.6" fill="#fff" opacity=".9" filter="url(#b1)"/>
<path d="M142.6,746 L142.6,760 M137.5,753.8 L148,753.8 M142.6,753.8 L148,748.4" stroke="#fff" stroke-width=".5" opacity=".8"/>
</g>
<!-- wmp -->
<g>
<polygon points="223,738.3 224.3,738.5 224.3,760 223,760.4" fill="#d7ebf8" opacity=".9"/>
<polygon points="221,737.9 222.4,738.1 222.4,760.8 221,761.2" fill="#d7ebf8" opacity=".9"/>
<polygon points="199.5,737.4 220.2,737.4 220.2,761.5 199.5,759" fill="#a9d4ee" opacity=".9" stroke="#7fb2d8" stroke-width=".5"/>
<circle cx="209.5" cy="748.9" r="8.5" fill="url(#wmo)"/>
<polygon points="205.5,743 205.5,755.2 215.5,748.9" fill="#fff"/>
</g>
<!-- active button -->
<g>
<rect x="245.5" y="728.5" width="59" height="42" rx="3" fill="url(#btn)" stroke="#10283f" stroke-width="1"/>
<rect x="246.5" y="729.5" width="57" height="41" rx="2.2" fill="none" stroke="#d8ecf8" stroke-opacity=".8" stroke-width="1"/>
</g>
<!-- tray -->
<g>
<!-- keyboard -->
<path d="M779.5,743.2 C779.5,740.6 782.5,741.6 784,741.4 C786,741.2 786.6,740.2 787.6,739.8" fill="none" stroke="#c9c2b4" stroke-width="1.1"/>
<rect x="775.8" y="743.2" width="15" height="9.6" rx="1.6" fill="#cbc7be" stroke="#8f8a80" stroke-width=".8"/>
<g fill="#8a857c"><rect x="777.6" y="745" width="1.6" height="1.4"/><rect x="780.2" y="745" width="1.6" height="1.4"/><rect x="782.8" y="745" width="1.6" height="1.4"/><rect x="785.4" y="745" width="1.6" height="1.4"/><rect x="788" y="745" width="1.6" height="1.4"/>
<rect x="777.6" y="747.4" width="1.6" height="1.4"/><rect x="780.2" y="747.4" width="1.6" height="1.4"/><rect x="782.8" y="747.4" width="1.6" height="1.4"/><rect x="785.4" y="747.4" width="1.6" height="1.4"/><rect x="788" y="747.4" width="1.6" height="1.4"/>
<rect x="779" y="749.8" width="8.6" height="1.3"/></g>
<!-- help -->
<circle cx="805.3" cy="745.9" r="7.6" fill="#1a1f9c" stroke="#b9c3d6" stroke-width="1.5"/>
<circle cx="805.3" cy="745.9" r="8.3" fill="none" stroke="#4a5670" stroke-width=".6"/>
<path d="M799.6,744 A6,6 0 0 1 811,744 C807,746 803,746 799.6,744Z" fill="#5a66d8" opacity=".7"/>
<text x="805.3" y="750.3" text-anchor="middle" font-family="Liberation Sans, sans-serif" font-weight="700" font-size="12" fill="#fff">?</text>
<!-- restore + down -->
<rect x="825.3" y="737.8" width="5.6" height="3.4" fill="none" stroke="#fff" stroke-width="1.1"/>
<rect x="823.2" y="739.8" width="5.4" height="3.2" fill="#204e8a" stroke="#fff" stroke-width="1.1"/>
<polygon points="823.8,750 829.2,750 826.5,753" fill="#fff"/>
<!-- up arrow -->
<polygon points="841.4,751.6 849.6,751.6 845.5,746.8" fill="#fff"/>
<!-- flag -->
<rect x="863" y="741" width="1.5" height="15.4" fill="#fff"/>
<path d="M864.6,742 C867,740.8 869,743.4 871.6,742.4 L875.4,744 L875.4,751 C873,752 871,750 868.6,750.8 L864.6,750.6Z" fill="#fff" opacity=".95"/>
<path d="M871.6,742.6 L875.8,744.6 L875.8,750 L871.6,748.4Z" fill="#c9d3e2"/>
<circle cx="872.6" cy="752.4" r="4.6" fill="#e02a22" stroke="#fff" stroke-opacity=".5" stroke-width=".5"/>
<path d="M870.6,750.4 L874.6,754.4 M874.6,750.4 L870.6,754.4" stroke="#fff" stroke-width="1.5"/>
<!-- network -->
<rect x="890.8" y="744.6" width="10.4" height="8.2" fill="#2a5a94" stroke="#fff" stroke-width="1.4"/>
<rect x="893.6" y="754.4" width="5.6" height="1.6" fill="#fff"/><rect x="895.6" y="752.8" width="1.6" height="2" fill="#fff"/>
<path d="M887.4,742 L887.4,745 M890.6,742 L890.6,745" stroke="#fff" stroke-width="1.1"/>
<rect x="886.6" y="744.6" width="4.8" height="3.6" fill="#fff"/>
<path d="M889,748 L889,754.8 L893,754.8" fill="none" stroke="#fff" stroke-width="1.3"/>
<!-- volume -->
<path d="M910.8,746.4 L913.6,746.4 L917.6,742.2 L917.6,756 L913.6,751.8 L910.8,751.8Z" fill="#fff" stroke="#c8d2e0" stroke-width=".5"/>
<path d="M919.6,746.6 Q921,749 919.6,751.6" fill="none" stroke="#fff" stroke-width="1"/>
<path d="M921.6,744.8 Q924,749 921.6,753.4" fill="none" stroke="#fff" stroke-width="1" opacity=".9"/>
<path d="M923.6,743.2 Q927,749 923.6,755" fill="none" stroke="#fff" stroke-width="1" opacity=".75"/>
<!-- show desktop -->
<rect x="1009.5" y="729.5" width="16" height="40" fill="#fff" fill-opacity=".12" stroke="#0e2238" stroke-width="1"/>
<rect x="1010.5" y="730.5" width="15" height="39" fill="none" stroke="#b9d2ea" stroke-opacity=".6" stroke-width="1"/>
</g>
<!-- usb app icon -->
<g id="usbico">
<rect x="260.2" y="741.4" width="29.8" height="20" rx="4" fill="url(#ubl)"/>
<rect x="263" y="733.5" width="24.2" height="11.6" rx="2.6" fill="url(#met)"/>
<path d="M264.6,735.6 Q264.6,733.8 267,733.8 L283.2,733.8 Q285.6,733.8 285.6,735.6 Z" fill="#1d1d1d"/>
<rect x="267.2" y="738.9" width="5.6" height="3.3" rx=".8" fill="#4a2a22"/><rect x="276.4" y="738.9" width="5.8" height="3.3" rx=".8" fill="#5a2e24"/>
<text x="262.6" y="758" font-family="Liberation Sans, Noto Sans CJK SC, sans-serif" font-weight="900" font-size="9" fill="#fff">装机</text>
<g transform="translate(283.2,756)"><path d="M0,-7.6 C2,-6 4,-5.4 6,-5.4 C6,0 4.5,4.6 0,7.6 C-4.5,4.6 -6,0 -6,-5.4 C-4,-5.4 -2,-6 0,-7.6 Z" fill="#e8e8e8" stroke="#8a8a8a" stroke-width=".6"/>
<g clip-path="url(#shc)" transform="scale(.84)"><rect x="-7" y="-8" width="7" height="8.4" fill="#2b7ad8"/><rect x="0" y="-8" width="7" height="8.4" fill="#ffd21f"/><rect x="-7" y=".4" width="7" height="8" fill="#ffd21f"/><rect x="0" y=".4" width="7" height="8" fill="#2b7ad8"/></g></g>
</g>

</svg>
<div class="tray" style="left:754.5px;top:739px;font-family:'Liberation Mono',monospace;font-size:10.5px;line-height:14px">CH</div>
<div class="tray" style="left:931px;top:731px;width:80px;text-align:center;font-size:13px;line-height:17px">16:53</div>
<div class="tray" style="left:931px;top:749px;width:80px;text-align:center;font-size:13px;line-height:17px">2020/4/29</div>
</body>
</html>
